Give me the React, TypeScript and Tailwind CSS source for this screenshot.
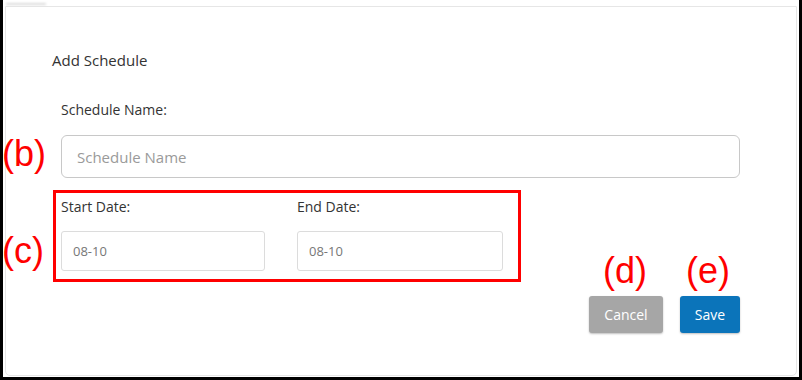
import React from 'react';

const Note = ({ text, className }: { text: string; className: string }) => (
  <span
    className={`absolute text-[36px] leading-none text-[#ff0000] font-['Liberation_Sans',Arial,sans-serif] ${className}`}
  >
    {text}
  </span>
);

const App = () => {
  return (
    <div className="w-[802px] h-[380px] bg-black pl-[3px] pr-[3px] pb-[3px] font-['Open_Sans',sans-serif]">
      <div className="relative h-full bg-white pt-[6px] pl-[2px] pr-[2px] pb-[1px]">
        {/* faint strip at the top */}
        <div className="absolute top-[3px] left-[3px] w-[40px] h-[2px] bg-[#dcdcdc] blur-[1px]" />

        <div className="h-full border border-[#e6e6e6] rounded-b-[5px] pl-[46px] pr-[56px] pt-[43px]">
          <h2 className="text-[15px] leading-[20px] text-[#333]">Add Schedule</h2>

          <div className="pl-[9px] pt-[30px]">
            <label className="block text-[14px] leading-[20px] text-[#333]">Schedule Name:</label>
            <input
              placeholder="Schedule Name"
              className="mt-[15px] w-full h-[43px] rounded-[6px] border border-[#c8c8c8] px-[15px] text-[15px] text-[#333] placeholder:text-[#9a9a9a] outline-none"
            />
          </div>

          {/* (c) highlighted date fields */}
          <div className="mt-[12px] ml-[1px] w-[468px] h-[92px] border-[3px] border-[#ff0000] pl-[5px] pt-[4px] flex gap-[32px]">
            <div className="w-[204px]">
              <label className="block text-[14px] leading-[20px] text-[#333]">Start Date:</label>
              <input
                defaultValue="08-10"
                className="mt-[14px] w-full h-[40px] rounded-[3px] border border-[#dcdcdc] px-[11px] text-[13px] text-[#777] outline-none"
              />
            </div>
            <div className="w-[206px]">
              <label className="block text-[14px] leading-[20px] text-[#333]">End Date:</label>
              <input
                defaultValue="08-10"
                className="mt-[14px] w-full h-[40px] rounded-[3px] border border-[#dcdcdc] px-[11px] text-[13px] text-[#777] outline-none"
              />
            </div>
          </div>

          <div className="mt-[14px] flex justify-end gap-[17px]">
            <button className="w-[74px] h-[37px] rounded-[3px] bg-[#a6a6a6] text-white text-[14px] shadow-[0_1px_2px_rgba(0,0,0,0.25)]">
              Cancel
            </button>
            <button className="w-[60px] h-[37px] rounded-[3px] bg-[#0b74ba] text-white text-[14px] shadow-[0_1px_2px_rgba(0,0,0,0.25)]">
              Save
            </button>
          </div>
        </div>

        <Note text="(b)" className="left-[-1px] top-[136px]" />
        <Note text="(c)" className="left-[-1px] top-[233px]" />
        <Note text="(d)" className="left-[600px] top-[253px]" />
        <Note text="(e)" className="left-[683px] top-[253px]" />
      </div>
    </div>
  );
};

export default App;
